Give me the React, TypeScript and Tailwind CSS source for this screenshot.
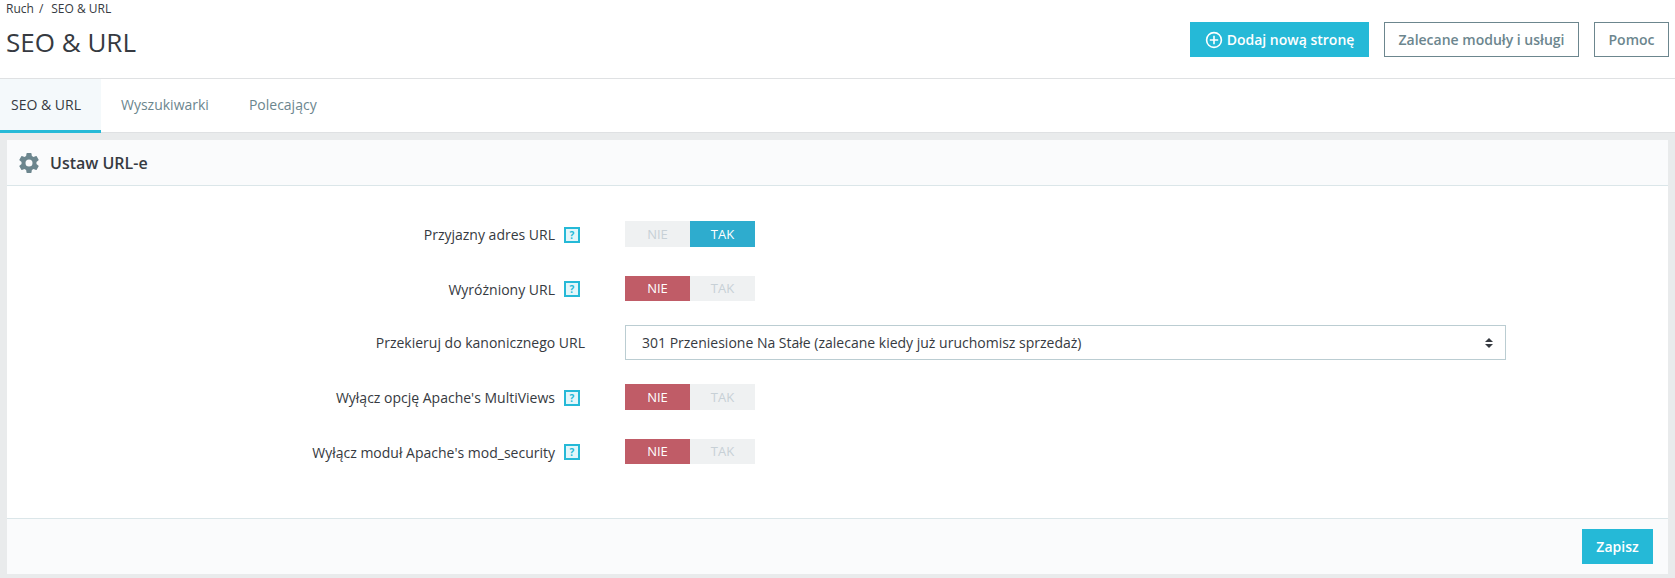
import React from "react";

const font = { fontFamily: '"Open Sans", sans-serif' };

function Help() {
  return (
    <span className="flex h-4 w-4 items-center justify-center border-2 border-[#25b9d7] bg-[#e3f6fa] text-[10px] font-bold leading-none text-[#25b9d7]">
      ?
    </span>
  );
}

function Toggle({ on, h }: { on: boolean; h: string }) {
  return (
    <div className={`flex w-[130px] text-[13px] ${h}`}>
      <div className={`flex w-[65px] items-center justify-center pt-[1px] ${on ? "bg-[#eff1f2] text-[#c7d0d6]" : "bg-[#c05c67] text-white"}`}>NIE</div>
      <div className={`flex w-[65px] items-center justify-center pt-[1px] ${on ? "bg-[#2eacce] text-white" : "bg-[#eff1f2] text-[#c7d0d6]"}`}>TAK</div>
    </div>
  );
}

function Row({ label, help, children, className }: { label: string; help?: boolean; children: React.ReactNode; className?: string }) {
  return (
    <div className={`flex items-center ${className ?? ""}`}>
      <div className={`flex items-center justify-end gap-[9px] text-[14px] text-[#363a41] ${help ? "w-[573px] pt-[1px]" : "w-[578px]"}`}>
        <span>{label}</span>
        {help && <Help />}
      </div>
      <div className={`flex-1 ${help ? "ml-[45px]" : "ml-[40px]"}`}>{children}</div>
    </div>
  );
}

export default function App() {
  return (
    <div style={font} className="flex h-[578px] w-[1675px] flex-col overflow-hidden bg-[#e9ebec]">
      <header className="flex h-[79px] shrink-0 justify-between border-b border-[#dfe1e3] bg-white pl-[6px] pr-[6px]">
        <div>
          <div className="flex h-[18px] items-center text-[12px] leading-none text-[#363a41]">
            <span>Ruch</span>
            <span className="ml-[5px]">/</span>
            <span className="ml-[8px]">SEO &amp; URL</span>
          </div>
          <h1 className="mt-[6px] text-[26px] font-normal leading-[36px] text-[#363a41]">SEO &amp; URL</h1>
        </div>
        <div className="mt-[22px] flex items-start gap-[15px]">
          <button className="flex h-[35px] w-[179px] items-center justify-center gap-[4px] bg-[#25b9d7] text-[14px] font-semibold text-white">
            <svg width="18" height="18" viewBox="0 0 18 18" fill="none" stroke="currentColor" strokeWidth="1.6">
              <circle cx="9" cy="9" r="7.4" />
              <path d="M9 4.8v8.4M4.8 9h8.4" />
            </svg>
            Dodaj nową stronę
          </button>
          <button className="h-[35px] w-[195px] border border-[#6c868e] bg-white text-[14px] font-semibold text-[#6c868e]">Zalecane moduły i usługi</button>
          <button className="h-[35px] w-[75px] border border-[#6c868e] bg-white text-[14px] font-semibold text-[#6c868e]">Pomoc</button>
        </div>
      </header>

      <nav className="flex h-[54px] shrink-0 border-b border-[#dfe1e3] bg-white pb-[2px] text-[14px]">
        <div className="-mb-[3px] flex h-[54px] w-[101px] items-center border-b-[3px] border-[#25b9d7] bg-[#f4f9fb] pl-[11px] text-[#363a41]">SEO &amp; URL</div>
        <div className="ml-[20px] flex items-center text-[#6c868e]">Wyszukiwarki</div>
        <div className="ml-[40px] flex items-center text-[#6c868e]">Polecający</div>
      </nav>

      <section className="mx-[7px] mt-[7px] flex h-[434px] flex-col rounded-[3px] bg-white">
        <div className="flex h-[46px] shrink-0 items-center gap-[9px] border-b border-[#dbe6e9] bg-[#fafbfc] pl-[10px] text-[16px] font-semibold text-[#363a41]">
          <svg width="24" height="24" viewBox="0 0 24 24" fill="#6c868e">
            <path d="M19.43 12.98c.04-.32.07-.64.07-.98s-.03-.66-.07-.98l2.11-1.65a.5.5 0 0 0 .12-.64l-2-3.46a.5.5 0 0 0-.61-.22l-2.49 1a7.3 7.3 0 0 0-1.69-.98l-.38-2.65A.49.49 0 0 0 14 2h-4a.49.49 0 0 0-.49.42l-.38 2.65c-.61.25-1.17.59-1.69.98l-2.49-1a.49.49 0 0 0-.61.22l-2 3.46a.49.49 0 0 0 .12.64l2.11 1.65c-.04.32-.07.65-.07.98s.03.66.07.98l-2.11 1.65a.5.5 0 0 0-.12.64l2 3.46c.12.22.39.3.61.22l2.49-1c.52.4 1.08.73 1.69.98l.38 2.65c.03.24.24.42.49.42h4c.25 0 .46-.18.49-.42l.38-2.65c.61-.25 1.17-.59 1.69-.98l2.49 1c.23.09.49 0 .61-.22l2-3.46a.5.5 0 0 0-.12-.64l-2.11-1.65zM12 15.5a3.5 3.5 0 1 1 0-7 3.5 3.5 0 0 1 0 7z" />
          </svg>
          Ustaw URL-e
        </div>
        <div className="flex-1 pt-[35px]">
          <Row label="Przyjazny adres URL" help className="h-[26px]"><Toggle on h="h-[26px]" /></Row>
          <Row label="Wyróżniony URL" help className="mt-[29px] h-[25px]"><Toggle on={false} h="h-[25px]" /></Row>
          <Row label="Przekieruj do kanonicznego URL" className="mt-[24px] h-[35px]">
            <div className="relative flex h-[35px] w-[881px] items-center border border-[#bbcdd2] pl-[16px] text-[14px] text-[#363a41]">
              301 Przeniesione Na Stałe (zalecane kiedy już uruchomisz sprzedaż)
              <svg className="absolute right-[12px] top-[12px]" width="8" height="10" viewBox="0 0 8 10" fill="#363a41">
                <path d="M4 0l4 4H0zM4 10L0 6h8z" />
              </svg>
            </div>
          </Row>
          <Row label="Wyłącz opcję Apache's MultiViews" help className="mt-[24px] h-[26px]"><Toggle on={false} h="h-[26px]" /></Row>
          <Row label="Wyłącz moduł Apache's mod_security" help className="mt-[29px] h-[25px]"><Toggle on={false} h="h-[25px]" /></Row>
        </div>
        <div className="flex h-[56px] shrink-0 items-start justify-end border-t border-[#dbe6e9] bg-[#fafbfc] pr-[15px] pt-[10px]">
          <button className="h-[35px] w-[71px] bg-[#25b9d7] text-[14px] font-semibold text-white">Zapisz</button>
        </div>
      </section>
    </div>
  );
}
